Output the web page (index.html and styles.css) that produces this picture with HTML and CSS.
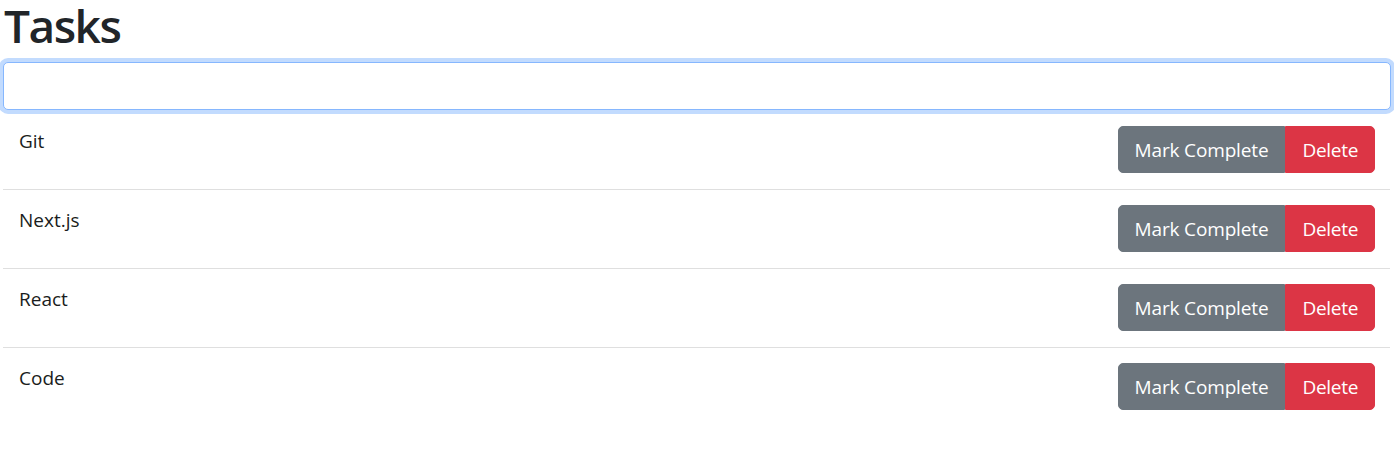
FILE: index.html
```html
<!DOCTYPE html>
<html lang="en">
<head>
<meta charset="utf-8">
<title>Tasks</title>
<link rel="stylesheet" href="styles.css">
</head>
<body>
<div class="page">
  <h1 class="title">Tasks</h1>
  <input class="task-input" type="text" aria-label="New task">
  <ul class="task-list">
    <li class="task-item">
      <span class="task-name">Git</span>
      <div class="btn-group">
        <button class="btn btn-secondary">Mark Complete</button>
        <button class="btn btn-danger">Delete</button>
      </div>
    </li>
    <li class="task-item">
      <span class="task-name">Next.js</span>
      <div class="btn-group">
        <button class="btn btn-secondary">Mark Complete</button>
        <button class="btn btn-danger">Delete</button>
      </div>
    </li>
    <li class="task-item">
      <span class="task-name">React</span>
      <div class="btn-group">
        <button class="btn btn-secondary">Mark Complete</button>
        <button class="btn btn-danger">Delete</button>
      </div>
    </li>
    <li class="task-item">
      <span class="task-name">Code</span>
      <div class="btn-group">
        <button class="btn btn-secondary">Mark Complete</button>
        <button class="btn btn-danger">Delete</button>
      </div>
    </li>
  </ul>
</div>
</body>
</html>
```

FILE: styles.css
```css
* { box-sizing: border-box; }

html, body {
  margin: 0;
  background: #fff;
  color: #212529;
  font-family: "Open Sans", "Noto Sans", sans-serif;
}

.page {
  padding: 0 3px;
}

.title {
  margin: 0 0 12px 1px;
  font-size: 46px;
  line-height: 50px;
  font-weight: 600;
  letter-spacing: -1.5px;
  color: #212529;
}

.task-input {
  display: block;
  width: 100%;
  height: 48px;
  margin: 0;
  padding: 8px 16px;
  font-family: inherit;
  font-size: 20px;
  color: #212529;
  background: #fff;
  border: 1px solid #86b7fe;
  border-radius: 5px;
  outline: none;
  box-shadow: 0 0 0 4px rgba(13, 110, 253, 0.25);
}

.task-list {
  list-style: none;
  margin: 1px 0 0 0;
  padding: 0;
}

.task-item {
  display: flex;
  justify-content: space-between;
  align-items: flex-start;
  padding: 15px 15px 16px 16px;
  border-bottom: 1px solid rgba(0, 0, 0, 0.125);
  margin-right: 1px;
}

.task-item:last-child {
  border-bottom: 0;
}

.task-name {
  font-size: 19px;
  line-height: 30px;
  color: #1a1d20;
}

.btn-group {
  display: flex;
}

.btn {
  height: 47px;
  padding: 0 16px;
  font-family: inherit;
  font-size: 19px;
  line-height: 30px;
  letter-spacing: -0.15px;
  color: #fff;
  border: 1px solid transparent;
  cursor: pointer;
}

.btn-secondary {
  background: #6c757d;
  border-color: #6c757d;
  border-radius: 5px 0 0 5px;
}

.btn-danger {
  background: #dc3545;
  border-color: #dc3545;
  border-radius: 0 5px 5px 0;
  letter-spacing: -0.3px;
}
```
